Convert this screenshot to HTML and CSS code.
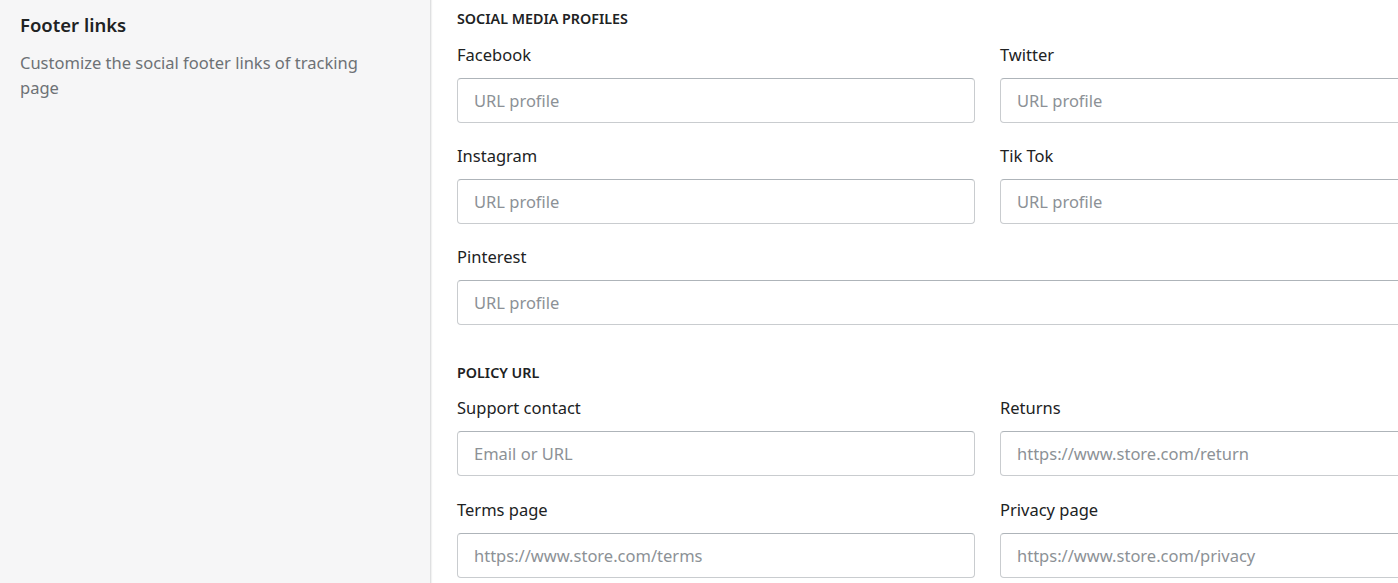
FILE: index.html
```html
<!DOCTYPE html>
<html>
<head>
<meta charset="utf-8">
<link rel="stylesheet" href="styles.css">
</head>
<body>
<div class="layout">
  <aside class="side">
    <h2 class="side-title">Footer links</h2>
    <p class="side-desc">Customize the social footer links of tracking page</p>
  </aside>
  <main class="main">
    <section class="section">
      <h3 class="section-title">SOCIAL MEDIA PROFILES</h3>
      <div class="grid">
        <div class="field"><label class="label">Facebook</label><input class="input" placeholder="URL profile"></div>
        <div class="field"><label class="label">Twitter</label><input class="input" placeholder="URL profile"></div>
        <div class="field"><label class="label">Instagram</label><input class="input" placeholder="URL profile"></div>
        <div class="field"><label class="label">Tik Tok</label><input class="input" placeholder="URL profile"></div>
        <div class="field full"><label class="label">Pinterest</label><input class="input" placeholder="URL profile"></div>
      </div>
    </section>
    <section class="section second">
      <h3 class="section-title">POLICY URL</h3>
      <div class="grid">
        <div class="field"><label class="label">Support contact</label><input class="input" placeholder="Email or URL"></div>
        <div class="field"><label class="label">Returns</label><input class="input" placeholder="https://www.store.com/return"></div>
        <div class="field"><label class="label">Terms page</label><input class="input" placeholder="https://www.store.com/terms"></div>
        <div class="field"><label class="label">Privacy page</label><input class="input" placeholder="https://www.store.com/privacy"></div>
      </div>
    </section>
  </main>
</div>
</body>
</html>
```
FILE: styles.css
```css
html, body {
  margin: 0;
  padding: 0;
  overflow: hidden;
  background: #ffffff;
  font-family: "Noto Sans", "Open Sans", sans-serif;
  color: #202223;
}
.layout {
  display: flex;
  height: 583px;
  width: 1600px;
}
.side {
  width: 431px;
  flex: none;
  background: #f6f6f7;
  border-right: 1px solid #dfe0e1;
  box-shadow: 1px 0 1px rgba(0,0,0,0.05);
  box-sizing: border-box;
  padding: 12px 20px 0 20px;
}
.side-title {
  margin: 0;
  font-size: 18.5px;
  line-height: 26px;
  font-weight: 600;
  color: #202223;
}
.side-desc {
  margin: 12px 0 0 0;
  font-size: 16.5px;
  line-height: 25px;
  color: #6d7175;
  width: 370px;
}
.main {
  padding: 9px 0 0 26px;
}
.section-title {
  margin: 0;
  font-size: 14.3px;
  line-height: 20px;
  font-weight: 600;
  color: #202223;
}
.second {
  margin-top: 38px;
}
.second .grid {
  margin-top: 13px;
  row-gap: 22px;
}
.grid {
  margin-top: 14px;
  display: grid;
  grid-template-columns: 518px 518px;
  column-gap: 25px;
  row-gap: 21px;
  width: 1061px;
}
.full {
  grid-column: 1 / -1;
}
.field {
  display: flex;
  flex-direction: column;
}
.label {
  font-size: 16.5px;
  line-height: 24px;
  margin-bottom: 11px;
  color: #202223;
}
.input {
  height: 45px;
  box-sizing: border-box;
  border: 1px solid #c9cccf;
  border-top-color: #aeb4b9;
  border-radius: 4px;
  padding: 0 16px;
  font-family: inherit;
  font-size: 16.5px;
  color: #202223;
  background: #fff;
  outline: none;
}
.input::placeholder {
  color: #8c9196;
}
```
